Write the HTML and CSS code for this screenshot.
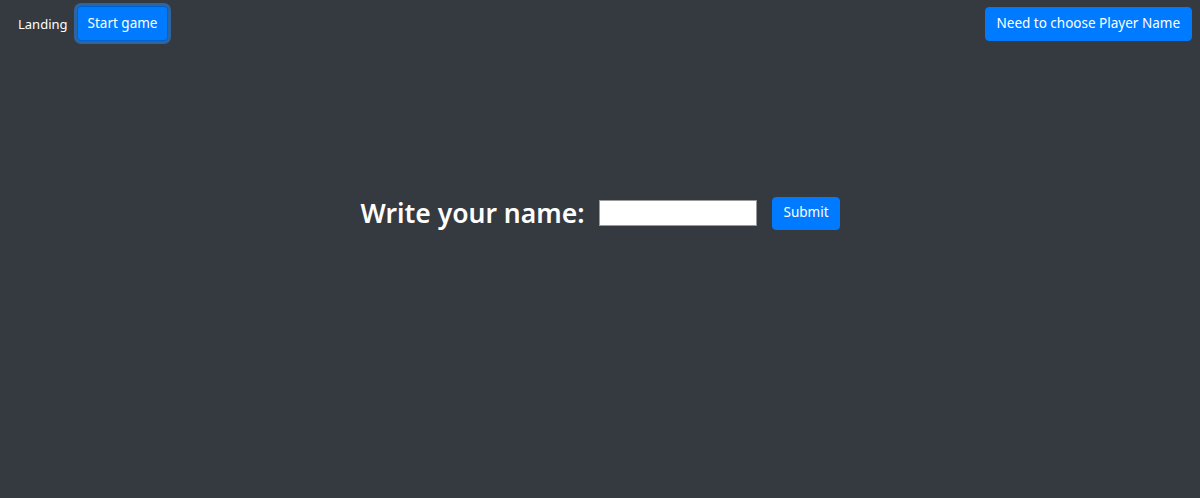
FILE: index.html
```html
<!DOCTYPE html>
<html>
<head>
<meta charset="utf-8">
<link rel="stylesheet" href="styles.css">
</head>
<body>
<header class="topbar">
  <div class="left">
    <span class="brand">Landing</span>
    <button class="btn btn-focus">Start game</button>
  </div>
  <button class="btn btn-wide">Need to choose Player Name</button>
</header>
<main class="main">
  <form class="name-form">
    <label class="label" for="name">Write your name:</label>
    <input class="input" id="name" type="text">
    <button class="btn btn-submit" type="button">Submit</button>
  </form>
</main>
</body>
</html>
```
FILE: styles.css
```css
html, body {
  margin: 0;
  height: 100%;
}
body {
  background: #343a40;
  color: #fff;
  font-family: "Segoe UI", "Noto Sans", "Open Sans", sans-serif;
  font-size: 13px;
}
.topbar {
  display: flex;
  justify-content: space-between;
  align-items: flex-start;
  padding: 6px 8px 0 18px;
}
.left {
  display: flex;
  align-items: center;
  gap: 9px;
}
.brand {
  font-size: 13px;
  color: #fff;
}
.btn {
  font-family: inherit;
  font-size: 13.5px;
  color: #fff;
  background: #007bff;
  border: 1px solid #007bff;
  border-radius: 4px;
  height: 34px;
  padding: 0 10px;
  line-height: 1;
}
.btn-wide {
  margin-top: 1px;
  padding: 0 11px;
}
.btn-focus {
  height: 35px;
  box-shadow: 0 0 0 3px rgba(38, 143, 255, 0.5);
  border-color: #0062cc;
}
.main {
  display: flex;
  justify-content: center;
  padding-top: 154px;
}
.name-form {
  display: flex;
  align-items: center;
}
.label {
  font-size: 26.5px;
  font-weight: 600;
  margin-right: 15px;
}
.input {
  width: 158px;
  height: 26px;
  box-sizing: border-box;
  border: 1px solid #999;
  background: #fff;
  margin-right: 15px;
  padding: 0;
}
.btn-submit {
  height: 33px;
  padding: 0 10px;
}
```
